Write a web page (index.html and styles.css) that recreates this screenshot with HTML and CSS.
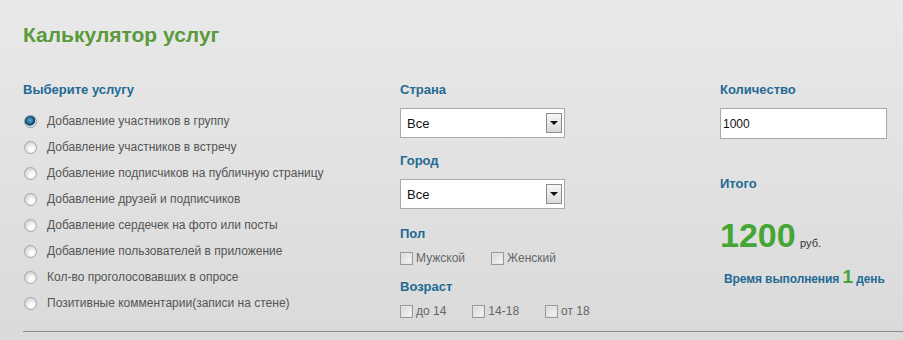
FILE: index.html
```html
<!DOCTYPE html>
<html lang="ru">
<head>
  <meta charset="UTF-8" />
  <meta name="viewport" content="width=device-width, initial-scale=1.0"/>
  <title>Калькулятор услуг</title>
  <link rel="stylesheet" href="styles.css">
</head>
<body>
  <div class="calc">
    <h1 class="title">Калькулятор услуг</h1>

    <div class="cols">
      <div class="col col-service">
        <h3 class="label">Выберите услугу</h3>
        <ul class="services">
          <li><label><input type="radio" name="service" checked> Добавление участников в группу</label></li>
          <li><label><input type="radio" name="service"> Добавление участников в встречу</label></li>
          <li><label><input type="radio" name="service"> Добавление подписчиков на публичную страницу</label></li>
          <li><label><input type="radio" name="service"> Добавление друзей и подписчиков</label></li>
          <li><label><input type="radio" name="service"> Добавление сердечек на фото или посты</label></li>
          <li><label><input type="radio" name="service"> Добавление пользователей в приложение</label></li>
          <li><label><input type="radio" name="service"> Кол-во проголосовавших в опросе</label></li>
          <li><label><input type="radio" name="service"> Позитивные комментарии(записи на стене)</label></li>
        </ul>
      </div>

      <div class="col col-filters">
        <h3 class="label">Страна</h3>
        <div class="select">
          <select><option>Все</option></select>
          <span class="select-arrow"></span>
        </div>

        <h3 class="label label-next">Город</h3>
        <div class="select">
          <select><option>Все</option></select>
          <span class="select-arrow"></span>
        </div>

        <h3 class="label label-small">Пол</h3>
        <div class="checks">
          <label><input type="checkbox"> Мужской</label>
          <label><input type="checkbox"> Женский</label>
        </div>

        <h3 class="label label-age">Возраст</h3>
        <div class="checks">
          <label><input type="checkbox"> до 14</label>
          <label><input type="checkbox"> 14-18</label>
          <label><input type="checkbox"> от 18</label>
        </div>
      </div>

      <div class="col col-total">
        <h3 class="label">Количество</h3>
        <input type="text" class="amount" value="1000">

        <h3 class="label label-total">Итого</h3>
        <div class="price"><span class="price-value">1200</span> <span class="price-cur">руб.</span></div>
        <div class="term">Время выполнения <span class="term-days">1</span> день</div>
      </div>
    </div>

    <hr class="divider">
  </div>
</body>
</html>
```

FILE: styles.css
```css
body {
  margin: 0;
  font-family: Arial, "Liberation Sans", sans-serif;
  background: linear-gradient(#e9e9e9, #dadada);
  height: 340px;
  overflow: hidden;
}

.calc {
  padding-left: 23px;
}

.title {
  margin: 0;
  padding-top: 21px;
  font-size: 21px;
  line-height: 28px;
  color: #5b9a3c;
}

.cols {
  display: grid;
  grid-template-columns: 377px 320px 1fr;
  margin-top: 33px;
}

.label {
  margin: 0;
  font-size: 13px;
  line-height: 16px;
  color: #236a94;
}

/* services */
.services {
  list-style: none;
  margin: 10px 0 0;
  padding: 0;
}

.services li {
  height: 26px;
  display: flex;
  align-items: center;
}

.services label {
  display: flex;
  align-items: center;
  font-size: 12px;
  color: #555;
}

.services input[type="radio"] {
  appearance: none;
  width: 13px;
  height: 13px;
  margin: 0 10px 0 1px;
  border-radius: 50%;
  border: 1px solid #a6a6a6;
  background: radial-gradient(circle at 62% 66%, #fdfdfd 20%, #e2e2e2 55%, #c4c4c4 100%);
  box-sizing: border-box;
}

.services input[type="radio"]:checked {
  border-color: #8a9aa8;
  background: radial-gradient(circle at 45% 40%, #6aaed2 0, #1d5f8c 40%, #0e3a5a 55%, #dfe6ec 62%, #f4f4f4 100%);
}

/* filters */
.select {
  position: relative;
  width: 165px;
  height: 30px;
  margin-top: 10px;
}

.select select {
  appearance: none;
  width: 100%;
  height: 100%;
  border: 1px solid #a9a9a9;
  background: #fff;
  font-family: Arial, "Liberation Sans", sans-serif;
  font-size: 13px;
  color: #111;
  padding: 0 0 0 6px;
  border-radius: 0;
}

.select-arrow {
  position: absolute;
  top: 5px;
  right: 3px;
  width: 16px;
  height: 20px;
  box-sizing: border-box;
  border: 1px solid #8c8c8c;
  background: linear-gradient(#f7f7f7, #d9d9d9);
  pointer-events: none;
}

.select-arrow::after {
  content: "";
  position: absolute;
  left: 3px;
  top: 7px;
  border-left: 4px solid transparent;
  border-right: 4px solid transparent;
  border-top: 4px solid #111;
}

.label-next {
  margin-top: 15px;
}

.label-small {
  margin-top: 17px;
}

.label-age {
  margin-top: 11px;
}

.checks {
  display: flex;
  gap: 26px;
  height: 20px;
  align-items: center;
  margin-top: 6px;
}

.checks label {
  display: flex;
  align-items: center;
  font-size: 12px;
  color: #666;
}

.checks input[type="checkbox"] {
  appearance: none;
  width: 13px;
  height: 13px;
  margin: 0 3px 0 0;
  border: 1px solid #9a9a9a;
  background: linear-gradient(135deg, #d6d6d6, #f8f8f8);
  box-shadow: inset 0 0 0 1px #e4e4e4;
  box-sizing: border-box;
}

/* total */
.amount {
  display: block;
  width: 167px;
  height: 31px;
  margin-top: 10px;
  box-sizing: border-box;
  border: 1px solid #a9a9a9;
  padding: 0 2px;
  font-family: Arial, "Liberation Sans", sans-serif;
  font-size: 12px;
  color: #111;
}

.label-total {
  margin-top: 37px;
}

.price {
  margin-top: 23px;
  line-height: 40px;
  color: #333;
}

.price-value {
  font-size: 34px;
  font-weight: bold;
  color: #45a535;
}

.price-cur {
  font-size: 11px;
}

.term {
  margin-top: 4px;
  padding-left: 4px;
  font-size: 12px;
  font-weight: bold;
  color: #236a94;
  line-height: 20px;
  letter-spacing: -0.1px;
}

.term-days {
  font-size: 19px;
  color: #45a535;
}

.divider {
  margin: 10px 0 0;
  border: none;
  border-top: 1px solid #8a8a8a;
}
```
